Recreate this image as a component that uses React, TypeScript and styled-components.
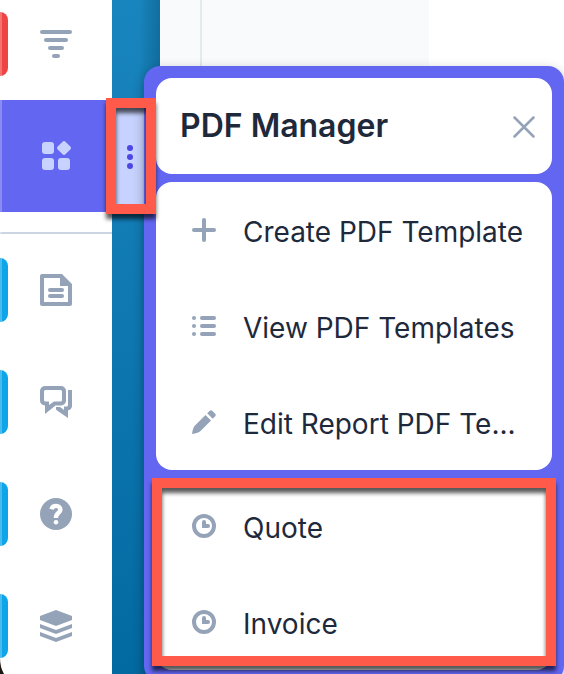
import React from "react";
import styled, { createGlobalStyle } from "styled-components";

const GlobalStyle = createGlobalStyle`
  *, *::before, *::after { box-sizing: border-box; }
  body { margin: 0; background: #fff; font-family: Inter, "Liberation Sans", sans-serif; color: #1e293b; }
  button { font: inherit; color: inherit; border: 0; padding: 0; background: none; cursor: pointer; }
  h2 { margin: 0; }
  svg { display: block; flex: none; }
`;

const Page = styled.div`
  position: relative;
  display: flex;
  height: 100vh;
  overflow: hidden;
`;

const Sidebar = styled.nav`
  position: relative;
  z-index: 2;
  flex: none;
  width: 112px;
  background: #fff;
  color: #94a3b8;
`;

const SidebarList = styled.div`
  margin-top: -12px;
`;

const WindowEdge = styled.div`
  position: absolute;
  inset: 0 auto 0 0;
  width: 2px;
  background: rgba(255, 255, 255, 0.25);
`;

const WindowCorner = styled.svg`
  position: absolute;
  left: 0;
  bottom: 0;
`;

const Entry = styled.div<{ $active?: boolean }>`
  position: relative;
  display: flex;
  height: 112px;
  background: ${(p) => (p.$active ? "#6366f1" : "transparent")};
  color: ${(p) => (p.$active ? "#c7d2fe" : "inherit")};
`;

const EntryButton = styled.button`
  flex: 1;
  display: grid;
  place-items: center;
`;

const Tab = styled.span<{ $color: string }>`
  position: absolute;
  left: 0;
  top: 24px;
  width: 8px;
  height: 64px;
  border-radius: 0 8px 8px 0;
  background: ${(p) => p.$color};
`;

const MoreButton = styled.button`
  position: absolute;
  left: 100%;
  top: 0;
  width: 36px;
  height: 100%;
  display: grid;
  place-items: center;
  background: #c7d2fe;
  color: #4f46e5;
`;

const Divider = styled.hr`
  height: 2px;
  margin: 20px 0 0;
  border: 0;
  background: #cbd5e1;
`;

const Backdrop = styled.div`
  flex: none;
  width: 48px;
  background: linear-gradient(90deg, rgba(0, 50, 80, 0) 55%, rgba(0, 50, 80, 0.28)),
    linear-gradient(#1985be, #0369a1);
`;

const Content = styled.main`
  flex: 1;
  display: flex;
  background: #fff;
`;

const Gutter = styled.div`
  width: 42px;
  background: #f8fafc;
  border-right: 2px solid #e2ebea;
`;

const Panel = styled.div`
  flex: none;
  width: 227px;
  background: #f8fafc;
`;

const Popover = styled.section`
  position: absolute;
  z-index: 3;
  top: 66px;
  left: 144px;
  right: 0;
  display: flex;
  flex-direction: column;
  gap: 8px;
  padding: 12px;
  border-radius: 16px;
  background: #6366f1;
  box-shadow: 0 4px 12px rgba(0, 0, 0, 0.3);
`;

const Card = styled.div`
  border-radius: 16px;
  background: #fff;
  overflow: hidden;
`;

const Header = styled(Card)`
  display: flex;
  align-items: center;
  justify-content: space-between;
  height: 96px;
  padding: 0 16px 0 24px;
`;

const Title = styled.h2`
  font-size: 32px;
  line-height: 40px;
  font-weight: 600;
`;

const CloseButton = styled.button`
  color: #94a3b8;
`;

const Item = styled.button`
  display: flex;
  align-items: center;
  gap: 27px;
  width: 100%;
  height: 96px;
  padding: 0 24px 0 36px;
  text-align: left;
  svg { color: #94a3b8; }
`;

const Label = styled.span`
  padding-top: 3px;
  font-size: 28px;
  line-height: 40px;
  white-space: nowrap;
`;

const Highlight = styled.div<{ $x: number; $y: number; $w: number; $h: number }>`
  position: absolute;
  z-index: 4;
  left: ${(p) => p.$x}px;
  top: ${(p) => p.$y}px;
  width: ${(p) => p.$w}px;
  height: ${(p) => p.$h}px;
  border: 10px solid #ff5a4a;
  filter: drop-shadow(0 5px 2px rgba(0, 0, 0, 0.65));
  pointer-events: none;
`;

const WideHighlight = styled(Highlight)`
  width: auto;
  right: 8px;
`;

type IconProps = { size: number; children: React.ReactNode };
const Icon = ({ size, children }: IconProps) => (
  <svg width={size} height={size} viewBox={`0 0 ${size} ${size}`} fill="currentColor" aria-hidden="true">
    {children}
  </svg>
);

const FilterIcon = () => (
  <Icon size={32}>
    <rect x="0" y="2" width="32" height="4" rx="2" />
    <rect x="4" y="10" width="24" height="4" rx="2" />
    <rect x="8" y="18" width="16" height="4" rx="2" />
    <rect x="12" y="26" width="8" height="4" rx="2" />
  </Icon>
);
const AppsIcon = () => (
  <Icon size={32}>
    <rect x="2" y="2" width="12" height="12" rx="3" />
    <rect x="2" y="18" width="12" height="12" rx="3" />
    <rect x="18" y="18" width="12" height="12" rx="3" />
    <rect x="18.500" y="2.500" width="11" height="11" rx="2" transform="rotate(45 24 8)" />
  </Icon>
);
const DotsIcon = () => (
  <Icon size={26}>
    <circle cx="13" cy="5" r="3" />
    <circle cx="13" cy="14" r="3" />
    <circle cx="13" cy="23" r="3" />
  </Icon>
);
const DocumentIcon = () => (
  <Icon size={32}>
    <path
      fillRule="evenodd"
      d="M2 0H22L32 10V30a2 2 0 0 1-2 2H2a2 2 0 0 1-2-2V2a2 2 0 0 1 2-2ZM4 4V28H28V12H20V4Z"
    />
    <rect x="8" y="14" width="16" height="4" rx="2" />
    <rect x="8" y="20" width="16" height="4" rx="2" />
  </Icon>
);
const ChatIcon = () => (
  <Icon size={32}>
    <path
      fillRule="evenodd"
      d="M5 0H21a5 5 0 0 1 5 5V14.500a5 5 0 0 1-5 5H15.500L5 28V19.500a5 5 0 0 1-5-5V5a5 5 0 0 1 5-5ZM5.500 4A1.500 1.500 0 0 0 4 5.500V14a1.500 1.500 0 0 0 1.500 1.500H9V19L14 15.500H20.500A1.500 1.500 0 0 0 22 14V5.500A1.500 1.500 0 0 0 20.500 4Z"
    />
    <path d="M28 4H32V19.500a5 5 0 0 1-4 5V32L18.500 25.500L16 23.500V21H20L24 24V20.500H26.500Q28 20.500 28 19Z" />
  </Icon>
);
const HelpIcon = () => (
  <Icon size={32}>
    <circle cx="16" cy="16" r="16" />
    <path d="M11.500 11.200C12.500 6.800 20.400 6.600 20.400 11.700C20.400 15.200 15.900 14.500 15.900 20" fill="none" stroke="#fff" strokeWidth="4.400" />
    <circle cx="16" cy="24.200" r="2.300" fill="#fff" />
  </Icon>
);
const LayersIcon = () => (
  <Icon size={32}>
    <path d="M16 0L32 6V10L16 16L0 10V6Z" />
    <path d="M0 14L16 20L32 14V18L16 24L0 18Z" />
    <path d="M0 22L16 28L32 22V26L16 32L0 26Z" />
  </Icon>
);
const PlusIcon = () => (
  <Icon size={24}>
    <rect x="10" y="0" width="4" height="24" rx="2" />
    <rect x="0" y="10" width="24" height="4" rx="2" />
  </Icon>
);
const ListIcon = () => (
  <Icon size={24}>
    {[4, 12, 20].map((y) => (
      <g key={y}>
        <circle cx="2" cy={y} r="2" />
        <rect x="8" y={y - 2} width="16" height="4" rx="2" />
      </g>
    ))}
  </Icon>
);
const PencilIcon = () => (
  <Icon size={24}>
    <path d="M13.500 5L19 10.500L8.500 21Q6.500 23 0 24Q.800 17.500 3 15.500Z" />
    <path d="M15.200 3.300L17.500 1Q19 -.500 20.500 1L23 3.500Q24.500 5 23 6.500L20.700 8.800Z" />
  </Icon>
);
const ClockIcon = () => (
  <Icon size={24}>
    <circle cx="12" cy="12" r="10" fill="none" stroke="currentColor" strokeWidth="4" />
    <path d="M10 8a2 2 0 0 1 4 0V10H16a2 2 0 0 1 0 4H10Z" />
  </Icon>
);
const CloseIcon = () => (
  <Icon size={24}>
    <path d="M2.500 3.500L21.500 22.500M21.500 3.500L2.500 22.500" fill="none" stroke="currentColor" strokeWidth="2.500" strokeLinecap="round" />
  </Icon>
);

const sections = [
  { label: "Documents", icon: <DocumentIcon /> },
  { label: "Messages", icon: <ChatIcon /> },
  { label: "Help", icon: <HelpIcon /> },
  { label: "Layers", icon: <LayersIcon /> },
];

const groups = [
  [
    { label: "Create PDF Template", icon: <PlusIcon /> },
    { label: "View PDF Templates", icon: <ListIcon /> },
    { label: "Edit Report PDF Te...", icon: <PencilIcon /> },
  ],
  [
    { label: "Quote", icon: <ClockIcon /> },
    { label: "Invoice", icon: <ClockIcon /> },
  ],
];

export default function App() {
  return (
    <>
      <GlobalStyle />
      <Page>
        <Sidebar>
          <SidebarList>
            <Entry>
              <Tab $color="#ef4444" />
              <EntryButton aria-label="Filter"><FilterIcon /></EntryButton>
            </Entry>
            <Entry $active>
              <EntryButton aria-label="Apps"><AppsIcon /></EntryButton>
              <MoreButton aria-label="More options"><DotsIcon /></MoreButton>
            </Entry>
            <Divider />
            {sections.map((s) => (
              <Entry key={s.label}>
                <Tab $color="#0ea5e9" />
                <EntryButton aria-label={s.label}>{s.icon}</EntryButton>
              </Entry>
            ))}
          </SidebarList>
          <WindowEdge />
          <WindowCorner width="4" height="16" viewBox="0 0 4 16" aria-hidden="true">
            <path d="M0 0Q0 9 4 16H0Z" fill="#1c1712" />
          </WindowCorner>
        </Sidebar>
        <Backdrop />
        <Content>
          <Gutter />
          <Panel />
        </Content>
        <Popover aria-labelledby="pdf-title">
          <Header>
            <Title id="pdf-title">PDF Manager</Title>
            <CloseButton aria-label="Close"><CloseIcon /></CloseButton>
          </Header>
          {groups.map((items, i) => (
            <Card key={i}>
              {items.map((item) => (
                <Item key={item.label}>
                  {item.icon}
                  <Label>{item.label}</Label>
                </Item>
              ))}
            </Card>
          ))}
        </Popover>
        <Highlight $x={106} $y={98} $w={50} $h={116} />
        <WideHighlight $x={152} $y={478} $w={404} $h={188} />
      </Page>
    </>
  );
}
